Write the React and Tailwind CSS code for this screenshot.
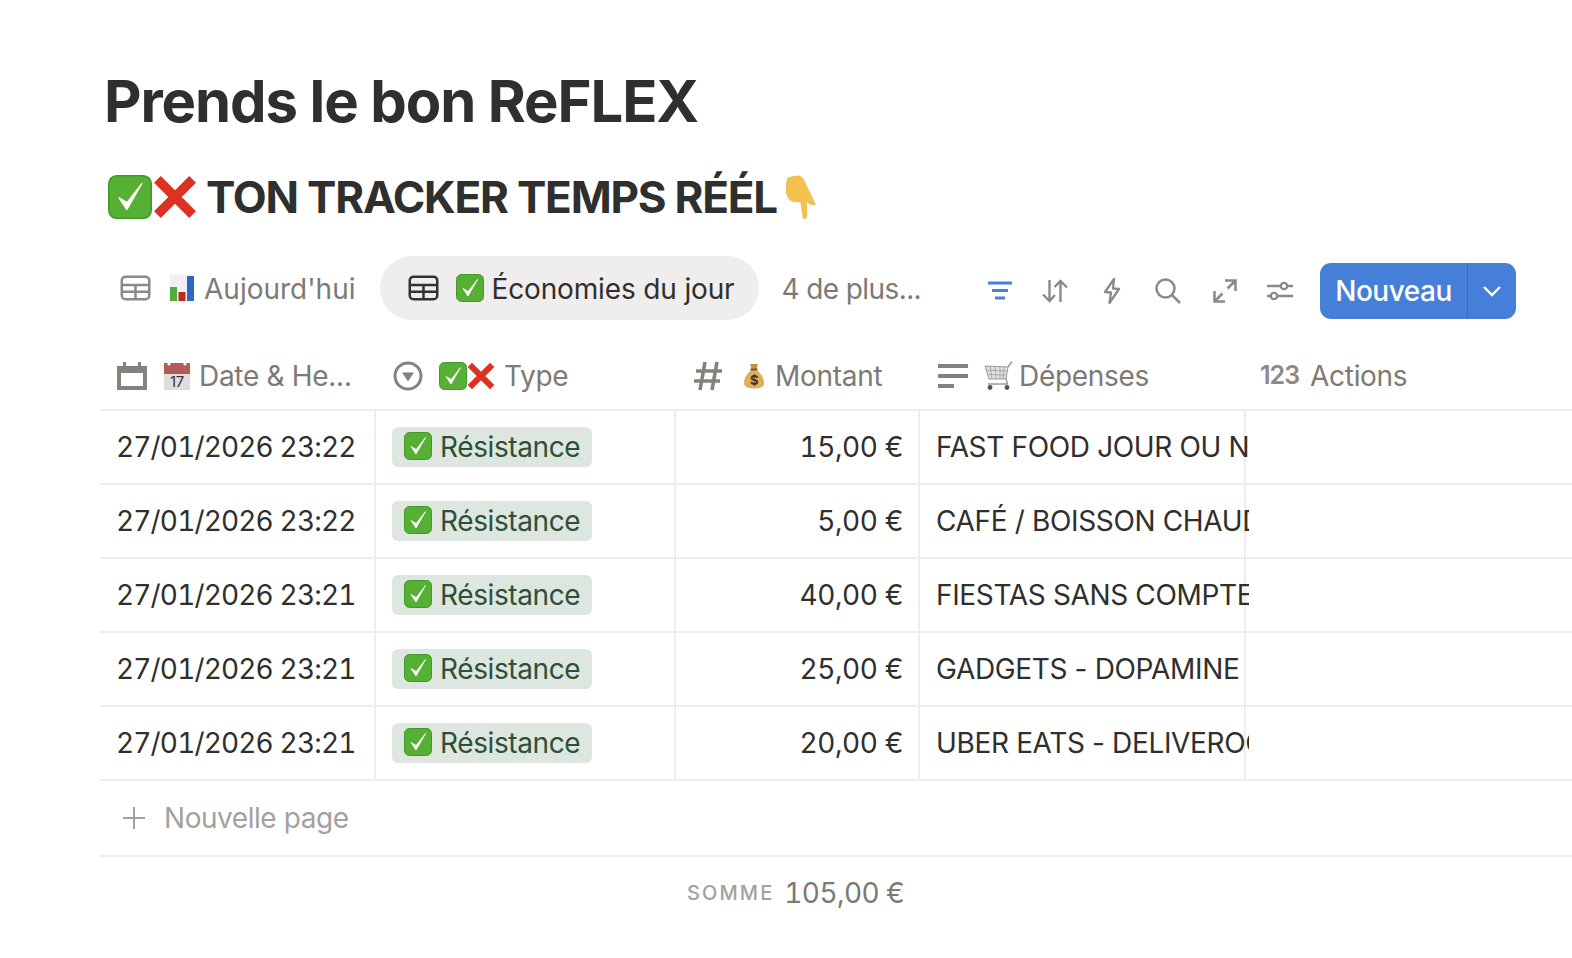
import React from "react";

// petits emojis dessinés (pas de police emoji couleur ici)
const CheckEmoji = ({ className }) => (
    <svg viewBox="0 0 28 28" className={className}>
        <rect x="0.5" y="0.5" width="27" height="27" rx="5" fill="#55b033" stroke="#3f9a2b" />
        <path d="M7 14.5 L12 22 L21.5 5.5 L12.2 17.5 Z" fill="#fff" stroke="#fff" strokeWidth="0.8" strokeLinejoin="round" />
    </svg>
);

const CrossEmoji = ({ className }) => (
    <svg viewBox="0 0 30 30" className={className}>
        <path d="M3 3 L27 27 M27 3 L3 27" stroke="#dd3222" strokeWidth="6.5" />
    </svg>
);

const ChartEmoji = ({ className }) => (
    <svg viewBox="0 0 26 28" className={className}>
        <rect x="0.5" y="0.5" width="25" height="27" fill="#f0f0f0" />
        <rect x="1" y="13" width="7" height="14" fill="#4fae3d" />
        <rect x="9.5" y="18" width="7" height="9" fill="#c3281c" />
        <rect x="18" y="2" width="7" height="25" fill="#2d66c3" />
    </svg>
);

const CalendarEmoji = ({ className }) => (
    <svg viewBox="0 0 28 28" className={className}>
        <rect x="1" y="1" width="26" height="27" fill="#dedede" />
        <rect x="1" y="1" width="26" height="11" fill="#b25b58" />
        <circle cx="6" cy="2" r="1.6" fill="#fff" />
        <circle cx="22" cy="2" r="1.6" fill="#fff" />
        <text x="14" y="25" textAnchor="middle" fontSize="15" fontFamily="Inter, sans-serif" fill="#333">17</text>
    </svg>
);

const BagEmoji = ({ className }) => (
    <svg viewBox="0 0 22 26" className={className}>
        <path d="M7 1 L15 1 L13.5 6 L8.5 6 Z" fill="#c9933d" />
        <path d="M8.5 7 C3 11 1 16 1 20 C1 24 5 25.5 11 25.5 C17 25.5 21 24 21 20 C21 16 19 11 13.5 7 Z" fill="#dcb05c" />
        <rect x="7.5" y="5.5" width="7" height="2" fill="#7a5224" />
        <text x="11" y="22" textAnchor="middle" fontSize="13" fontWeight="700" fontFamily="Inter, sans-serif" fill="#4a3215">$</text>
    </svg>
);

const CartEmoji = ({ className }) => (
    <svg viewBox="0 0 30 30" fill="none" className={className}>
        <path d="M1 5 L24 6 L22 18 L5 18 Z" fill="#e2e2e2" stroke="#9a9a9a" />
        <path d="M6 5 L8 18 M11 5 L12 18 M16 5.5 L16 18 M20 6 L19 18 M2 9 L23 10 M3 13.5 L22.5 14" stroke="#9a9a9a" strokeWidth="0.8" />
        <path d="M24 6 L28 0.5 M22 18 L23.5 23 L4 23" stroke="#9a9a9a" strokeWidth="1.4" />
        <circle cx="6" cy="26.5" r="2.4" fill="#555" />
        <circle cx="23" cy="26.5" r="2.4" fill="#555" />
    </svg>
);

const PointEmoji = ({ className }) => (
    <svg viewBox="0 0 30 44" className={className}>
        <path d="M1.3 3.3 C5 1.5 10 1 14 1 C17 3 19 7 20.7 11.7 C23 16 26 22 28 26.7 C29 28 29.5 29.5 29 30 C26.5 30 24 29 22.3 27.7 L20.7 25 L20.7 41.7 C20.5 43.5 18 44 17.3 43.3 L14.7 26.7 C10 27 6 26.5 4 25 C1.5 22 0 18 0 15 C0 11 1 7 1.3 3.3 Z" fill="#f5c14e" stroke="#e8ab35" strokeWidth="0.6" />
    </svg>
);

const TableIcon = ({ className }) => (
    <svg viewBox="0 0 24 24" fill="none" stroke="currentColor" strokeWidth="2" className={className}>
        <rect x="1" y="3" width="22" height="18" rx="3" />
        <path d="M1 9.5 H23 M1 15 H23 M12 9.5 V21" />
    </svg>
);

const CalendarIcon = ({ className }) => (
    <svg viewBox="0 0 30 28" fill="currentColor" className={className}>
        <path fillRule="evenodd" d="M0 4 H6 V0 H9 V4 H21 V0 H24 V4 H30 V28 H0 Z M4 11 V24 H26 V11 Z" />
    </svg>
);

const SelectIcon = ({ className }) => (
    <svg viewBox="0 0 30 30" fill="none" className={className}>
        <circle cx="15" cy="15" r="13" stroke="currentColor" strokeWidth="3" />
        <path d="M9 11.5 H21 L15 20.5 Z" fill="currentColor" />
    </svg>
);

const HashIcon = ({ className }) => (
    <svg viewBox="0 0 30 30" fill="none" stroke="currentColor" strokeWidth="3.6" className={className}>
        <path d="M12 1 L7 29 M24 1 L19 29 M3 10 H29 M1 20 H27" />
    </svg>
);

const TextIcon = ({ className }) => (
    <svg viewBox="0 0 30 30" fill="currentColor" className={className}>
        <rect x="0" y="3" width="30" height="4" />
        <rect x="0" y="13" width="30" height="4" />
        <rect x="0" y="23" width="16" height="4" />
    </svg>
);

const FilterIcon = ({ className }) => (
    <svg viewBox="0 0 26 22" fill="none" stroke="currentColor" strokeWidth="3" className={className}>
        <path d="M1 3 H25 M5 10.5 H21 M8 18 H18" />
    </svg>
);

const SortIcon = ({ className }) => (
    <svg viewBox="0 0 26 24" fill="none" stroke="currentColor" strokeWidth="2.4" className={className}>
        <path d="M7.5 1 V22 M1 15.5 L7.5 22 L13 16 M18.5 23 V2 M12.5 8 L18.5 2 L25 8.5" />
    </svg>
);

const BoltIcon = ({ className }) => (
    <svg viewBox="0 0 18 26" fill="none" stroke="currentColor" strokeWidth="2.3" strokeLinejoin="round" className={className}>
        <path d="M11 1 L2 14 L8 14.5 L6.5 25 L16 11 L10 10.5 Z" />
    </svg>
);

const SearchIcon = ({ className }) => (
    <svg viewBox="0 0 26 26" fill="none" stroke="currentColor" strokeWidth="2.5" className={className}>
        <circle cx="10.5" cy="10.5" r="9" />
        <path d="M17 17 L25 25" />
    </svg>
);

const ExpandIcon = ({ className }) => (
    <svg viewBox="0 0 24 24" fill="none" stroke="currentColor" strokeWidth="2.5" className={className}>
        <path d="M12 1.5 H22.5 V12 M22.5 1.5 L14.5 9.5 M9.5 14.5 L1.5 22.5 M1.5 12 V22.5 H12" />
    </svg>
);

const SlidersIcon = ({ className }) => (
    <svg viewBox="0 0 26 24" fill="none" stroke="currentColor" strokeWidth="2.3" className={className}>
        <path d="M0 7 H13.5 M20.5 7 H26 M0 17 H3.5 M10.5 17 H26" />
        <circle cx="17" cy="7" r="3.2" />
        <circle cx="7" cy="17" r="3.2" />
    </svg>
);

const rows = [
    { date: "27/01/2026 23:22", amount: "15,00 €", label: "FAST FOOD JOUR OU NUIT" },
    { date: "27/01/2026 23:22", amount: "5,00 €", label: "CAFÉ / BOISSON CHAUDE" },
    { date: "27/01/2026 23:21", amount: "40,00 €", label: "FIESTAS SANS COMPTER" },
    { date: "27/01/2026 23:21", amount: "25,00 €", label: "GADGETS - DOPAMINE" },
    { date: "27/01/2026 23:21", amount: "20,00 €", label: "UBER EATS - DELIVEROO" },
];

export default function App() {
    return (
        <div className="h-[958px] w-[1572px] overflow-hidden bg-white pl-[100px] pt-[63px] font-['Inter',sans-serif] text-[#2f2f2d]">
            <h1 className="ml-[4px] h-[76px] text-[58px] leading-[76px] font-bold tracking-[-1.1px]">
                Prends le bon ReFLEX
            </h1>

            <h2 className="mt-[28px] flex h-[60px] items-center text-[44px] font-bold tracking-[-1.2px]">
                <CheckEmoji className="ml-[7px] h-[44px] w-[46px]" />
                <CrossEmoji className="h-[44px] w-[44px]" />
                <span className="ml-[9px]">TON TRACKER TEMPS RÉÉL</span>
                <PointEmoji className="ml-[9px] h-[44px] w-[30px]" />
            </h2>

            {/* Onglets + actions */}
            <div className="mt-[29px] flex h-[64px] items-center pr-[56px]">
                <div className="ml-[20px] flex items-center text-[#7d7a75]">
                    <TableIcon className="h-[30px] w-[31px] text-[#8d8a85]" />
                    <ChartEmoji className="ml-[18px] h-[28px] w-[26px]" />
                    <span className="mt-[2px] ml-[9px] text-[28px]">Aujourd'hui</span>
                </div>
                <div className="ml-[24px] flex h-[64px] w-[379px] items-center rounded-full bg-[#efeeec] pl-[28px]">
                    <TableIcon className="h-[30px] w-[31px] text-[#33322f]" />
                    <CheckEmoji className="ml-[17px] h-[28px] w-[28px]" />
                    <span className="mt-[2px] ml-[8px] text-[28px] tracking-[-0.15px]">Économies du jour</span>
                </div>
                <span className="mt-[2px] ml-[23px] text-[28px] tracking-[-0.6px] text-[#7d7a75]">4 de plus...</span>
                <div className="mt-[6px] ml-auto flex items-center text-[#8d8a85]">
                    <FilterIcon className="h-[22px] w-[26px] text-[#4a7fd9]" />
                    <SortIcon className="ml-[29px] h-[24px] w-[26px]" />
                    <BoltIcon className="ml-[35px] h-[26px] w-[18px]" />
                    <SearchIcon className="ml-[34px] h-[26px] w-[26px]" />
                    <ExpandIcon className="ml-[32px] h-[24px] w-[24px]" />
                    <SlidersIcon className="ml-[30px] h-[24px] w-[26px]" />
                    <div className="ml-[27px] flex h-[56px] w-[196px] items-center rounded-[11px] bg-[#457fd9] text-white">
                        <span className="flex h-full w-[148px] items-center justify-center border-r border-[#3b6cb9] text-[28px] font-medium tracking-[-0.5px]">
                            Nouveau
                        </span>
                        <svg viewBox="0 0 20 12" fill="none" stroke="currentColor" strokeWidth="2.4" className="ml-[14px] h-[12px] w-[20px]">
                            <path d="M2 2 L10 10 L18 2" />
                        </svg>
                    </div>
                </div>
            </div>

            {/* En-tête */}
            <div className="mt-[23px] flex h-[68px] items-center border-b-2 border-[#efeeec] text-[28px] tracking-[-0.3px] text-[#7d7a75]">
                <div className="flex w-[276px] items-center pl-[17px]">
                    <CalendarIcon className="h-[28px] w-[30px] text-[#85827d]" />
                    <CalendarEmoji className="ml-[16px] h-[28px] w-[28px]" />
                    <span className="ml-[8px]">Date &amp; He...</span>
                </div>
                <div className="flex w-[300px] items-center pl-[17px]">
                    <SelectIcon className="h-[30px] w-[30px] text-[#85827d]" />
                    <CheckEmoji className="ml-[16px] h-[28px] w-[28px]" />
                    <CrossEmoji className="h-[28px] w-[28px]" />
                    <span className="ml-[9px]">Type</span>
                </div>
                <div className="flex w-[244px] items-center pl-[17px]">
                    <HashIcon className="h-[30px] w-[30px] text-[#85827d]" />
                    <BagEmoji className="ml-[20px] h-[26px] w-[22px]" />
                    <span className="ml-[10px]">Montant</span>
                </div>
                <div className="flex w-[326px] items-center pl-[18px]">
                    <TextIcon className="h-[30px] w-[30px] text-[#85827d]" />
                    <CartEmoji className="ml-[16px] h-[30px] w-[30px]" />
                    <span className="ml-[5px]">Dépenses</span>
                </div>
                <div className="flex items-center pl-[14px]">
                    <span className="text-[25px] font-semibold tracking-[-1px] text-[#8d8a85]">123</span>
                    <span className="ml-[11px]">Actions</span>
                </div>
            </div>

            {rows.map((row, i) => (
                <div key={i} className="flex h-[74px] border-b-2 border-[#efeeec] text-[28px] text-[#2f2f2d]">
                    <div className="flex w-[276px] items-center border-r-2 border-[#efeeec] pl-[16px] tabular-nums tracking-[-0.85px]">
                        {row.date}
                    </div>
                    <div className="flex w-[300px] items-center border-r-2 border-[#efeeec] pl-[16px]">
                        <span className="flex h-[40px] w-[200px] items-center rounded-[6px] bg-[#dde6df] pl-[12px] text-[#2f5038]">
                            <CheckEmoji className="mb-[2px] h-[28px] w-[28px]" />
                            <span className="ml-[8px] tracking-[-0.4px]">Résistance</span>
                        </span>
                    </div>
                    <div className="flex w-[244px] items-center justify-end border-r-2 border-[#efeeec] pr-[15px] tabular-nums tracking-[-0.4px]">
                        {row.amount}
                    </div>
                    <div className="flex w-[326px] items-center whitespace-nowrap border-r-2 border-[#efeeec] pl-[16px] tracking-[-0.35px]">
                        <span className="w-[313px] shrink-0 overflow-hidden">{row.label}</span>
                    </div>
                </div>
            ))}

            <div className="flex h-[76px] items-center border-b-2 border-[#efeeec] pl-[23px] text-[28px] tracking-[-0.45px] text-[#a3a19c]">
                <svg viewBox="0 0 22 22" fill="none" stroke="currentColor" strokeWidth="2" className="h-[22px] w-[22px]">
                    <path d="M11 0 V22 M0 11 H22" />
                </svg>
                <span className="ml-[19px]">Nouvelle page</span>
            </div>

            <div className="flex h-[72px] w-[804px] items-center justify-end text-[#7d7a75]">
                <span className="text-[20px] font-medium tracking-[2.1px] text-[#a3a19c]">SOMME</span>
                <span className="ml-[10px] text-[28px] tabular-nums tracking-[-0.6px]">105,00 €</span>
            </div>
        </div>
    );
}
